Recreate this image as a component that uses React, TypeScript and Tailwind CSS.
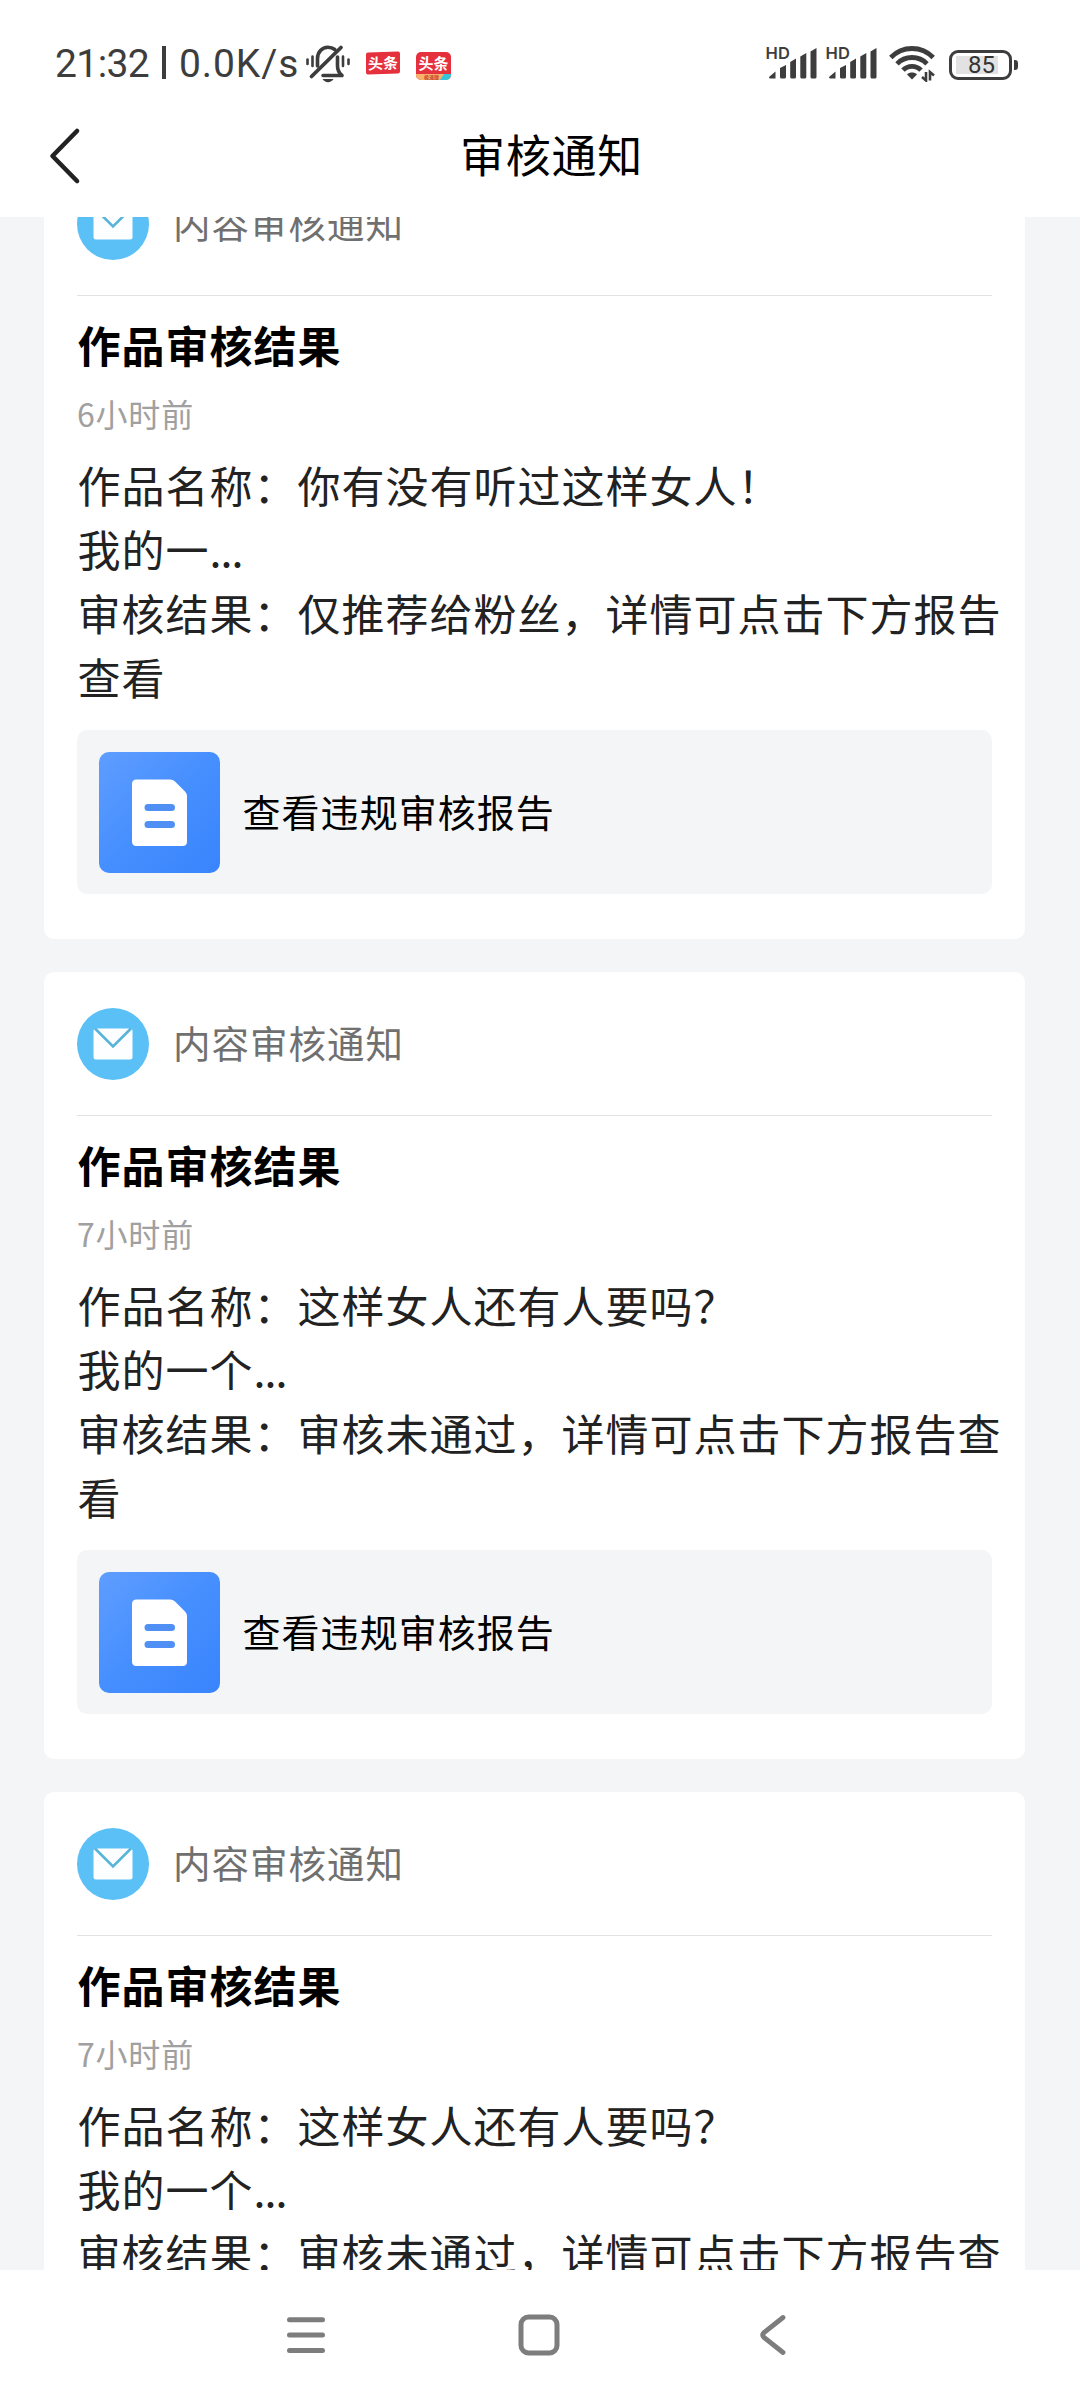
type Notice = { time: string; name: string; excerpt: string; result: string[] };

const notices: Notice[] = [
  {
    time: '6小时前',
    name: '作品名称：你有没有听过这样女人！',
    excerpt: '我的一',
    result: ['审核结果：仅推荐给粉丝，详情可点击下方报告', '查看'],
  },
  {
    time: '7小时前',
    name: '作品名称：这样女人还有人要吗？',
    excerpt: '我的一个',
    result: ['审核结果：审核未通过，详情可点击下方报告查', '看'],
  },
  {
    time: '7小时前',
    name: '作品名称：这样女人还有人要吗？',
    excerpt: '我的一个',
    result: ['审核结果：审核未通过，详情可点击下方报告查', '看'],
  },
];

function MutedBell() {
  return (
    <svg width="46" height="40" viewBox="0 0 46 40" fill="none" stroke="#3d3d3d" strokeWidth="3.600" strokeLinecap="round">
      <path d="M12.500 22V14.500C12.500 8 17 3.200 22.800 3.200c3 0 5.200.8 7 2.300" />
      <path d="M32.500 13v9c0 3.500 1.500 7 4.500 9.500H18" strokeLinejoin="round" />
      <path d="M6.500 32.500 36 3.500" strokeWidth="3.800" />
      <path d="M17.500 35h11c-1 2-3.200 3.200-5.500 3.200s-4.400-1.200-5.500-3.200z" fill="#3d3d3d" stroke="none" />
      <path d="M2.500 15.500v4.500M7.500 12.500v9.500M38 12.500v9.500M43.500 15.500v4.500" strokeWidth="2.600" />
    </svg>
  );
}

function HeadlineBadge({ lite = false }: { lite?: boolean }) {
  return (
    <div className={lite ? 'h-7 w-[35px] overflow-hidden rounded-[5px] bg-[#e5303d]' : 'h-[22px] w-[34px] -skew-y-2 rounded-[2px] bg-[#e5303d]'}>
      <div className="h-[22px] text-center text-[15px] leading-[21px] font-bold text-white">头条</div>
      {lite && (
        <div className="flex h-[6px] bg-[#f7b36b]">
          <span className="ml-2 text-[5px] leading-[6px] font-bold whitespace-nowrap text-[#c8452e]">极速版</span>
          <span className="ml-auto h-[6px] w-[9px] -skew-x-[35deg] bg-[#35c4dd]" />
        </div>
      )}
    </div>
  );
}

function Signal() {
  return (
    <svg width="50" height="34" viewBox="0 0 50 34" fill="#3d3d3d" className="overflow-visible">
      <text x="-1.500" y="13" fontFamily="Inter, sans-serif" fontSize="16.500" fontWeight="600" textLength="24.500">HD</text>
      <path d="M2 31 8.500 25.500V32.500H3.500Q2 32.500 2 31ZM13 22 19 19V31Q19 32.500 17.500 32.500H14.500Q13 32.500 13 31ZM23.200 16 29 12.500V31Q29 32.500 27.500 32.500H24.700Q23.200 32.500 23.200 31ZM33.300 10.500 39.300 7V31Q39.300 32.500 37.800 32.500H34.800Q33.300 32.500 33.300 31ZM43.500 5.500 49.500 2V31Q49.500 32.500 48 32.500H45Q43.500 32.500 43.500 31Z" />
    </svg>
  );
}

function Wifi() {
  return (
    <svg width="46" height="36" viewBox="0 0 46 36" fill="none" stroke="#3d3d3d" strokeWidth="4.800">
      <path d="M1.800 11.500C13.500-.500 32.500-.500 44.200 11.500" />
      <path d="M8 17.800c8-8.400 22-8.400 30 0" />
      <path d="M14 24.200c5-5.200 13-5.200 18 0" />
      <path d="M18 28.500c2.500-2.600 7.500-2.600 10 0L23 33.500z" fill="#3d3d3d" stroke="none" />
      <path d="M37 26v8.500l-4-3.500M41 34.500v-8.500l4 3.500" strokeWidth="2.600" />
    </svg>
  );
}

function StatusBar() {
  return (
    <div className="flex h-[96px] shrink-0 items-start pt-11 text-[#3d3d3d]">
      <div className="ml-[55px] flex h-9 w-[250px] items-center font-[Roboto,sans-serif] text-[39px] leading-9 whitespace-pre">
        <span className="w-[107px] pt-[3px] tracking-[-0.600px]">21:32</span>
        <span className="h-[33px] w-[3.500px] bg-[#3d3d3d]" />
        <span className="ml-[13.500px] pt-[3px] tracking-[0.900px]">0.0K/s</span>
      </div>
      <MutedBell />
      <div className="mt-2 ml-[15px] flex gap-4">
        <HeadlineBadge />
        <HeadlineBadge lite />
      </div>
      <div className="mt-[2px] ml-auto flex">
        <div className="flex gap-[10px]">
          <Signal />
          <Signal />
        </div>
        <div className="ml-[12px]">
          <Wifi />
        </div>
        <div className="mt-[1px] ml-[14px] flex items-center">
          <div className="flex h-[30px] w-[63px] items-center rounded-[9px] border-[3.500px] border-[#3d3d3d] pl-1">
            <div className="flex h-[18px] w-[42px] items-center justify-end bg-[#e2e2e2] pr-[3px] font-[Roboto,sans-serif] text-[24px] text-[#333]">85</div>
          </div>
          <span className="ml-[2px] h-[10px] w-1 rounded-r-[3px] bg-[#3d3d3d]" />
        </div>
        <span className="w-[62px]" />
      </div>
    </div>
  );
}

function MailIcon() {
  return (
    <svg width="72" height="72" viewBox="0 0 72 72" fill="none">
      <circle cx="36" cy="36" r="36" fill="#5bc0f5" />
      <rect x="16.500" y="20.500" width="39" height="31" rx="2.500" fill="#fcfeff" />
      <path d="M18 20.500 36 38.500 54 20.500" stroke="#58b4d8" strokeWidth="2.600" />
    </svg>
  );
}

function ReportIcon() {
  return (
    <svg width="121" height="121" viewBox="0 0 121 121" fill="none">
      <defs>
        <linearGradient id="report" x1="0" y1="0" x2="1" y2="1">
          <stop offset="0" stopColor="#5f9dff" />
          <stop offset="0.500" stopColor="#468fff" />
          <stop offset="1" stopColor="#3984fd" />
        </linearGradient>
      </defs>
      <rect width="121" height="121" rx="10" fill="url(#report)" />
      <path d="M37.500 27.500H71Q74 27.500 76 29.500L86 39.500Q88 41.500 88 44.500V89.500Q88 94 83.500 94H37.500Q33 94 33 89.500V32Q33 27.500 37.500 27.500Z" fill="#fff" />
      <path d="M49 55.500H72.500M49 72.500H72.500" stroke="#5090f5" strokeWidth="7" strokeLinecap="round" />
    </svg>
  );
}

function NoticeCard({ time, name, excerpt, result }: Notice) {
  return (
    <article className="h-[787px] w-[981px] shrink-0 rounded-[10px] bg-white px-[33px] pt-9">
      <div className="flex h-[108px] items-start border-b-[1.500px] border-[#e0e2e4]">
        <MailIcon />
        <span className="ml-[24px] text-[37.500px] leading-[67px] tracking-[1px] text-[#707070]">内容审核通知</span>
      </div>
      <h2 className="mt-[16px] text-[43px] leading-[64px] font-bold tracking-[1px] text-black">
        <span className="ml-[0.500px]">作品审核结果</span>
      </h2>
      <p className="mt-[12px] text-[32px] leading-[50px] tracking-[0.800px] text-[#a0a0a0]">{time}</p>
      <div className="mt-[14px] pl-[0.500px] text-[43px] leading-16 tracking-[1px] whitespace-nowrap text-[#222]">
        <p>{name}</p>
        <p>
          {excerpt}
          <span className="tracking-[-1px]">...</span>
        </p>
        {result.map((line) => (
          <p key={line}>{line}</p>
        ))}
      </div>
      <div className="mt-[22px] flex h-[164px] items-center rounded-[10px] bg-[#f3f5f7] pl-[22px]">
        <ReportIcon />
        <span className="ml-[22.500px] pb-[3px] text-[38px] tracking-[1.050px] text-black">查看违规审核报告</span>
      </div>
    </article>
  );
}

function NavBar() {
  return (
    <nav className="h-[130px] bg-white pt-11">
      <div className="flex text-[#7d7d7d]">
        <svg className="ml-[286px]" width="40" height="42" viewBox="0 0 40 42" stroke="currentColor" strokeWidth="5" strokeLinecap="round">
          <path d="M3.500 5.700H36.500M3.500 21H36.500M3.500 36.500H36.500" />
        </svg>
        <svg className="ml-[192px]" width="42" height="42" viewBox="0 0 42 42" fill="none" stroke="currentColor" strokeWidth="5">
          <rect x="3" y="3" width="36" height="36" rx="7.500" />
        </svg>
        <svg className="ml-[199px]" width="30" height="42" viewBox="0 0 30 42" fill="none" stroke="currentColor" strokeWidth="4.800" strokeLinecap="round">
          <path d="M24 3.500 5 18.500Q2.500 21 5 23.500L24 38.500" />
        </svg>
      </div>
    </nav>
  );
}

export default function App() {
  return (
    <div className="flex h-[2400px] w-[1080px] flex-col overflow-hidden bg-white font-['Noto_Sans_CJK_SC',sans-serif]">
      <StatusBar />
      <header className="grid h-[121px] shrink-0 grid-cols-3 items-center pb-[2px]">
        <svg className="ml-[47px]" width="36" height="60" viewBox="0 0 36 60" fill="none" stroke="#222" strokeWidth="4.600" strokeLinecap="round" strokeLinejoin="round">
          <path d="M30 5 5.500 30 30 55" />
        </svg>
        <h1 className="ml-[23px] pb-[4px] text-center text-[45px] tracking-[0.700px] text-black">审核通知</h1>
      </header>
      <main className="flex h-[2053px] shrink-0 flex-col items-start overflow-hidden bg-[#f3f5f7] pl-11">
        <div className="-mt-[65px] flex flex-col gap-[33px]">
          {notices.map((notice, index) => (
            <NoticeCard key={index} {...notice} />
          ))}
        </div>
      </main>
      <NavBar />
    </div>
  );
}
